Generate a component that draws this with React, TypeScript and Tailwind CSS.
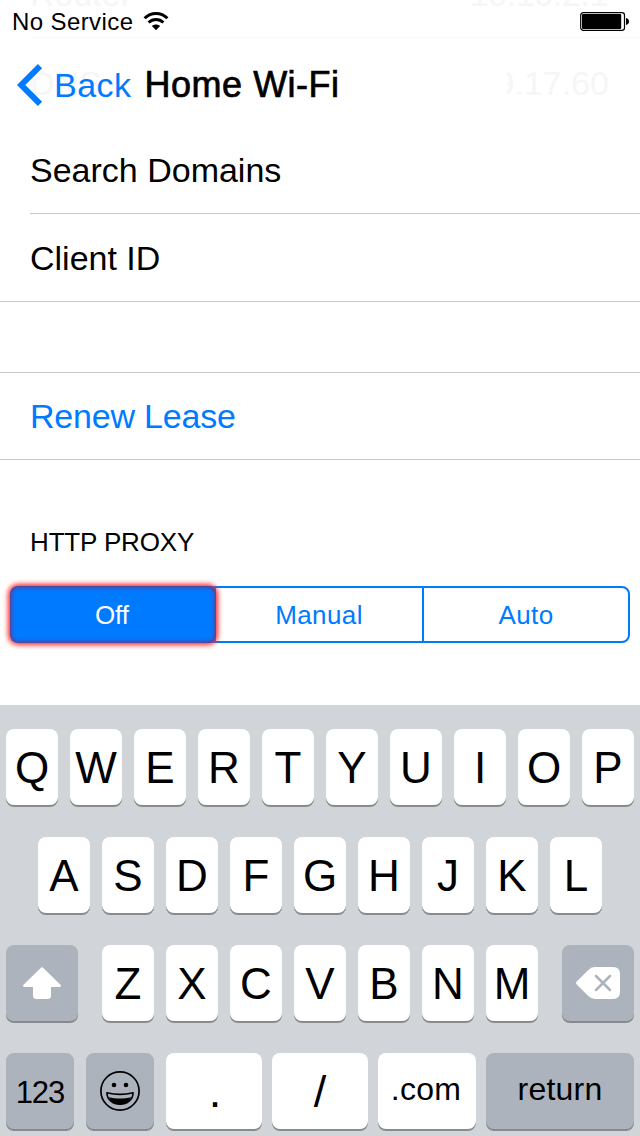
import { useState } from "react";
import type { ReactNode } from "react";
import clsx from "clsx";

const PROXY_MODES = ["Off", "Manual", "Auto"];

const TOP_ROW = "QWERTYUIOP".split("");
const HOME_ROW = "ASDFGHJKL".split("");
const BOTTOM_ROW = "ZXCVBNM".split("");

function WifiIcon() {
  return (
    <svg width="26" height="20" viewBox="0 0 26 20" fill="none" stroke="#000">
      <path d="M1.600 7.200C8 .8 18 .8 24.400 7.200" strokeWidth="3" />
      <path d="M5.600 11.500c4.200-4 10.600-4 14.800 0" strokeWidth="2.900" />
      <path d="M13 19.200l-4.100-4.200c2.400-2 5.800-2 8.200 0z" fill="#000" stroke="none" />
    </svg>
  );
}

function BatteryIcon() {
  return (
    <svg width="50" height="20" viewBox="0 0 50 20">
      <rect x="0.7" y="0.7" width="43.800" height="17.600" rx="2.600" fill="none" stroke="#000" strokeWidth="1.200" />
      <rect x="2" y="2" width="39.200" height="15" rx="1" />
      <path d="M46 6c2 .3 3 1.600 3 3.500s-1 3.200-3 3.500z" />
    </svg>
  );
}

function ShiftIcon() {
  return (
    <svg width="38" height="32" viewBox="0 0 38 32" fill="#fff">
      <path d="M18.200.5q.8-.7 1.600 0L37.700 18q.6 1.900-1 2H28v8.500q0 3.500-3.500 3.500h-11Q10 32 10 28.500V20H1.300q-1.600-.1-1-2z" />
    </svg>
  );
}

function DeleteIcon() {
  return (
    <svg width="44" height="32" viewBox="0 0 44 32">
      <path d="M.5 17.200q-.9-1.200 0-2.400L12 3.200Q15 0 19 0h18q7 0 7 7v18q0 7-7 7H19q-4 0-7-3.200z" fill="#fff" />
      <path d="M20 9l14 14M34 9L20 23" stroke="#acb3bd" strokeWidth="2.500" strokeLinecap="round" />
    </svg>
  );
}

function EmojiIcon() {
  return (
    <svg width="40" height="40" viewBox="0 0 40 40">
      <circle cx="20" cy="20" r="19.100" fill="none" stroke="#000" strokeWidth="1.700" />
      <circle cx="14" cy="14" r="2.300" />
      <circle cx="26" cy="14" r="2.300" />
      <path d="M6.900 21.800c8.200 2 18 2 26.200 0C33 29 27 33.200 20 33.200S7 29 6.900 21.800z" fill="none" stroke="#000" strokeWidth="1.600" strokeLinejoin="round" />
      <path d="M8.800 26.200c7 1.800 15.400 1.800 22.400 0C29 31 25 33.200 20 33.200S11 31 8.800 26.200z" />
    </svg>
  );
}

function Key({ children, className, dark }: { children: ReactNode; className?: string; dark?: boolean }) {
  return (
    <button
      className={clsx(
        "flex h-[76px] shrink-0 items-center justify-center rounded-lg shadow-[0_2px_0_#898a8d]",
        dark ? "bg-[#acb3bd]" : "bg-white",
        className ?? "w-[52px] pt-px text-[44px]"
      )}
    >
      {children}
    </button>
  );
}

function Keyboard() {
  return (
    <div className="flex h-[431px] flex-col gap-8 overflow-hidden bg-[#d1d5da] px-1.5 pt-6 leading-none">
      <div className="flex justify-center gap-3">
        {TOP_ROW.map((k) => (
          <Key key={k}>{k}</Key>
        ))}
      </div>
      <div className="flex justify-center gap-3">
        {HOME_ROW.map((k) => (
          <Key key={k}>{k}</Key>
        ))}
      </div>
      <div className="flex justify-between">
        <Key dark className="w-[72px]">
          <ShiftIcon />
        </Key>
        <div className="flex gap-3">
          {BOTTOM_ROW.map((k) => (
            <Key key={k}>{k}</Key>
          ))}
        </div>
        <Key dark className="w-[72px]">
          <DeleteIcon />
        </Key>
      </div>
      <div className="flex">
        <Key dark className="mr-3 w-[68px] pt-0.5 text-[31px] tracking-[-1px]">123</Key>
        <Key dark className="mr-3 w-[68px]">
          <EmojiIcon />
        </Key>
        <Key className="mr-2.5 w-24 pl-0.5 text-[45px]">.</Key>
        <Key className="mr-2.5 w-24 text-[45px]">/</Key>
        <Key className="mr-2.5 w-[98px] pb-1 pr-0.5 text-[32px] tracking-[0.3px]">.com</Key>
        <Key dark className="w-[148px] pb-1 text-[32px] tracking-[0.2px]">return</Key>
      </div>
    </div>
  );
}

export default function App() {
  const [mode, setMode] = useState("Off");

  return (
    <main className="relative flex h-[1136px] w-[640px] flex-col overflow-hidden bg-white font-['Liberation_Sans',sans-serif] text-[34px] leading-none text-black">
      {/* Status bar and navigation sit over the scrolled list */}
      <header className="absolute inset-x-0 top-0 z-10 h-[125px]">
        <div className="flex h-10 items-center pl-3 pr-2.5 pt-1">
          <span className="text-2xl leading-none tracking-[0.4px]">No Service</span>
          <span className="-mt-0.5 ml-2.5">
            <WifiIcon />
          </span>
          <span className="ml-auto">
            <BatteryIcon />
          </span>
        </div>
        <div className="flex h-[88px] items-center pl-[17px] pt-px">
          <button className="flex items-center text-[#007aff]">
            <svg width="26" height="42" viewBox="0 0 26 42" fill="none" stroke="currentColor" strokeWidth="6">
              <path d="M23 2.200L4.200 21 23 39.800" />
            </svg>
            <span className="ml-[11px] pt-px tracking-[0.5px]">Back</span>
          </button>
          <h1 className="ml-[13px] text-[36px] leading-none tracking-[0.5px] [-webkit-text-stroke:0.7px_#000]">Home Wi-Fi</h1>
        </div>
      </header>

      <section className="-mt-[51px]">
        <div className="text-[#f6f6f6]">
          <div className="ml-[30px] flex h-[89px] items-center justify-between border-b border-[#fafafa] pr-8 pt-0.5">
            <span>Router</span>
            <span className="tracking-[-0.4px]">10.10.2.1</span>
          </div>
          <div className="flex h-[87px] items-center justify-between pl-[30px] pr-[31px] pt-0.5">
            <span>DNS</span>
            <span className="flex w-[102px] justify-end overflow-hidden">9.17.60</span>
          </div>
        </div>
        <div className="ml-[30px] flex h-[89px] items-center border-b border-[#c8c7cc] pt-0.5">Search Domains</div>
        <div className="flex h-[88px] items-center border-b border-[#c8c7cc] pl-[30px]">Client ID</div>
      </section>

      <section className="mt-[70px] flex h-[88px] items-center border-y border-[#c8c7cc] pl-[30px]">
        <button className="tracking-[-0.2px] text-[#007aff]">Renew Lease</button>
      </section>

      <section className="h-[245px] px-2.5 pt-[69px]">
        <h2 className="pl-5 text-[26px] leading-[27px] tracking-[-0.15px]">HTTP PROXY</h2>
        <div className="mt-[30px] grid h-[57px] grid-cols-[204px_208px_204px] rounded-lg border-2 border-[#007aff] text-[26px] leading-none">
          {PROXY_MODES.map((m) => (
            <button
              key={m}
              onClick={() => setMode(m)}
              className={clsx(
                "relative border-[#007aff] nth-2:border-r-2",
                mode === m ? "z-10 bg-[#007aff] pr-1 text-white" : "tracking-[0.4px] text-[#007aff]"
              )}
            >
              {m}
              {mode === m && (
                <span className="absolute -inset-y-0.5 -left-0.5 right-0 rounded-lg shadow-[0_0_5px_2px_#ff2828,inset_0_0_4px_1px_#7d2a6a]" />
              )}
            </button>
          ))}
        </div>
      </section>

      <Keyboard />
    </main>
  );
}
